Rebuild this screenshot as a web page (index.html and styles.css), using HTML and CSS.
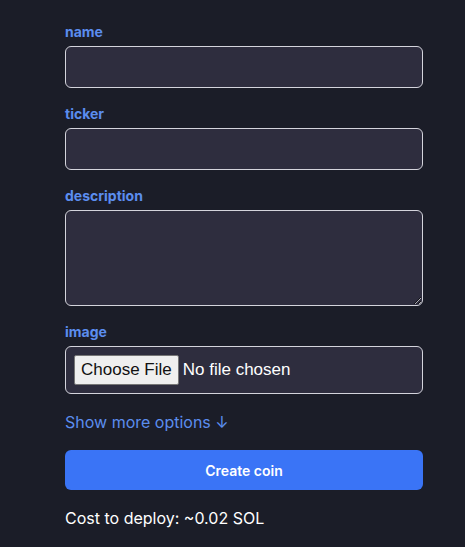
FILE: index.html
```html
<!DOCTYPE html>
<html>
<head>
<meta charset="utf-8">
<link rel="stylesheet" href="styles.css">
</head>
<body>
<form class="form">
  <div class="field">
    <label class="label" for="name">name</label>
    <input class="input" id="name" type="text">
  </div>
  <div class="field">
    <label class="label" for="ticker">ticker</label>
    <input class="input" id="ticker" type="text">
  </div>
  <div class="field">
    <label class="label" for="description">description</label>
    <textarea class="input textarea" id="description"></textarea>
  </div>
  <div class="field">
    <label class="label" for="image">image</label>
    <div class="filebox"><input class="file" id="image" type="file"></div>
  </div>
  <div class="more">Show more options ↓</div>
  <button class="create" type="button">Create coin</button>
  <div class="cost">Cost to deploy: ~0.02 SOL</div>
</form>
</body>
</html>
```
FILE: styles.css
```css
html, body {
  margin: 0;
  padding: 0;
  background: #1b1d28;
  height: 100%;
}
body {
  font-family: Inter, "Noto Sans", sans-serif;
  color: #ffffff;
}
.form {
  width: 358px;
  margin: 0 0 0 65px;
  padding-top: 22px;
  display: flex;
  flex-direction: column;
  gap: 16px;
}
.field {
  display: flex;
  flex-direction: column;
  gap: 4px;
}
.label {
  font-size: 14px;
  line-height: 20px;
  font-weight: 700;
  color: #5b8def;
}
.input {
  box-sizing: border-box;
  width: 100%;
  height: 42px;
  margin: 0;
  background: #2e2d3e;
  border: 1px solid #d4d4dc;
  border-radius: 6px;
  color: #fff;
  font-size: 16px;
  padding: 8px;
  outline: none;
}
.textarea {
  height: 96px;
  display: block;
  resize: vertical;
  font-family: Inter, sans-serif;
}
.filebox {
  box-sizing: border-box;
  height: 48px;
  background: #2e2d3e;
  border: 1px solid #d4d4dc;
  border-radius: 6px;
  padding: 8px;
  display: flex;
  align-items: center;
}
.file {
  font-family: "Liberation Sans", Arial, sans-serif;
  font-size: 17px;
  color: #ffffff;
}
.file::file-selector-button {
  font-family: "Liberation Sans", Arial, sans-serif;
  font-size: 17px;
  color: #111;
  background: #efefef;
  border: 1px solid #767676;
  border-radius: 2px;
  padding: 4px 6px;
  margin-right: 4px;
}
.more {
  font-size: 16px;
  line-height: 24px;
  color: #5b8def;
}
.create {
  height: 40px;
  border: none;
  border-radius: 6px;
  background: #3a74f6;
  color: #fff;
  font-family: Inter, sans-serif;
  font-size: 14px;
  font-weight: 600;
}
.cost {
  font-family: Inter, sans-serif;
  font-size: 16px;
  line-height: 24px;
  color: #fff;
}
```
